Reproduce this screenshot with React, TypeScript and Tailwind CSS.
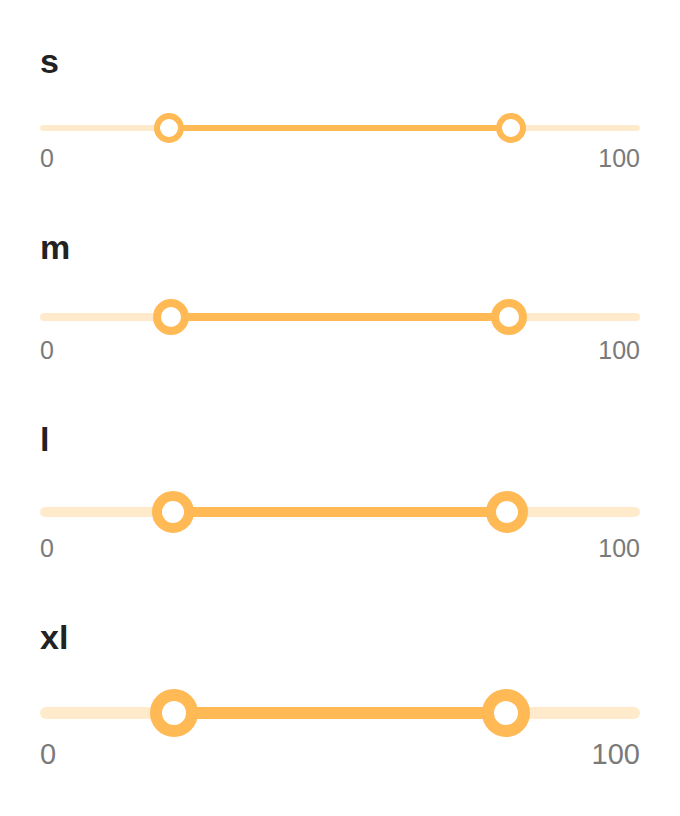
import React from "react";

type Size = "s" | "m" | "l" | "xl";

interface SizeStyle {
  thumb: number;
  track: string;
  thumbClass: string;
  numberClass: string;
}

const sizes: Record<Size, SizeStyle> = {
  s: {
    thumb: 30,
    track: "h-[6px]",
    thumbClass: "w-[30px] h-[30px] border-[6px]",
    numberClass: "text-[25px]",
  },
  m: {
    thumb: 36,
    track: "h-[8px]",
    thumbClass: "w-[36px] h-[36px] border-[8px]",
    numberClass: "text-[25px]",
  },
  l: {
    thumb: 42,
    track: "h-[10px]",
    thumbClass: "w-[42px] h-[42px] border-[10px]",
    numberClass: "text-[25px]",
  },
  xl: {
    thumb: 48,
    track: "h-[12px]",
    thumbClass: "w-[48px] h-[48px] border-[12px]",
    numberClass: "text-[29px]",
  },
};

const WIDTH = 600;
const MIN = 0;
const MAX = 100;

const RangeSlider: React.FC<{ size: Size; low: number; high: number }> = ({
  size,
  low,
  high,
}) => {
  const s = sizes[size];
  const r = s.thumb / 2;
  // thumb centre sits inside the track, inset by its radius
  const pos = (v: number) => r + ((v - MIN) / (MAX - MIN)) * (WIDTH - 2 * r);
  const a = pos(low);
  const b = pos(high);

  return (
    <div>
      <div
        className="relative flex items-center w-full"
        style={{ height: s.thumb }}
      >
        <div className={`w-full rounded-full bg-[#ffebcc] ${s.track}`} />
        <div
          className={`absolute top-1/2 -translate-y-1/2 bg-[#ffb955] ${s.track}`}
          style={{ left: a, width: b - a }}
        />
        {[a, b].map((x, i) => (
          <span
            key={i}
            className={`absolute top-0 -translate-x-1/2 rounded-full bg-white border-[#ffb955] ${s.thumbClass}`}
            style={{ left: x }}
          />
        ))}
      </div>
      <div
        className={`flex justify-between leading-[1.2] text-[#7a7a7a] ${s.numberClass}`}
      >
        <span>{MIN}</span>
        <span>{MAX}</span>
      </div>
    </div>
  );
};

const App: React.FC = () => {
  const items: Size[] = ["s", "m", "l", "xl"];
  return (
    <div
      className="min-h-[816px] bg-white px-10 pt-[41px] flex flex-col gap-[54px]"
      style={{ fontFamily: '"Liberation Sans", Arial, sans-serif' }}
    >
      {items.map((size) => (
        <div key={size} className="flex flex-col gap-8">
          <h2 className="text-[34px] leading-[40px] font-bold text-[#222222]">
            {size}
          </h2>
          <RangeSlider size={size} low={20} high={80} />
        </div>
      ))}
    </div>
  );
};

export default App;
